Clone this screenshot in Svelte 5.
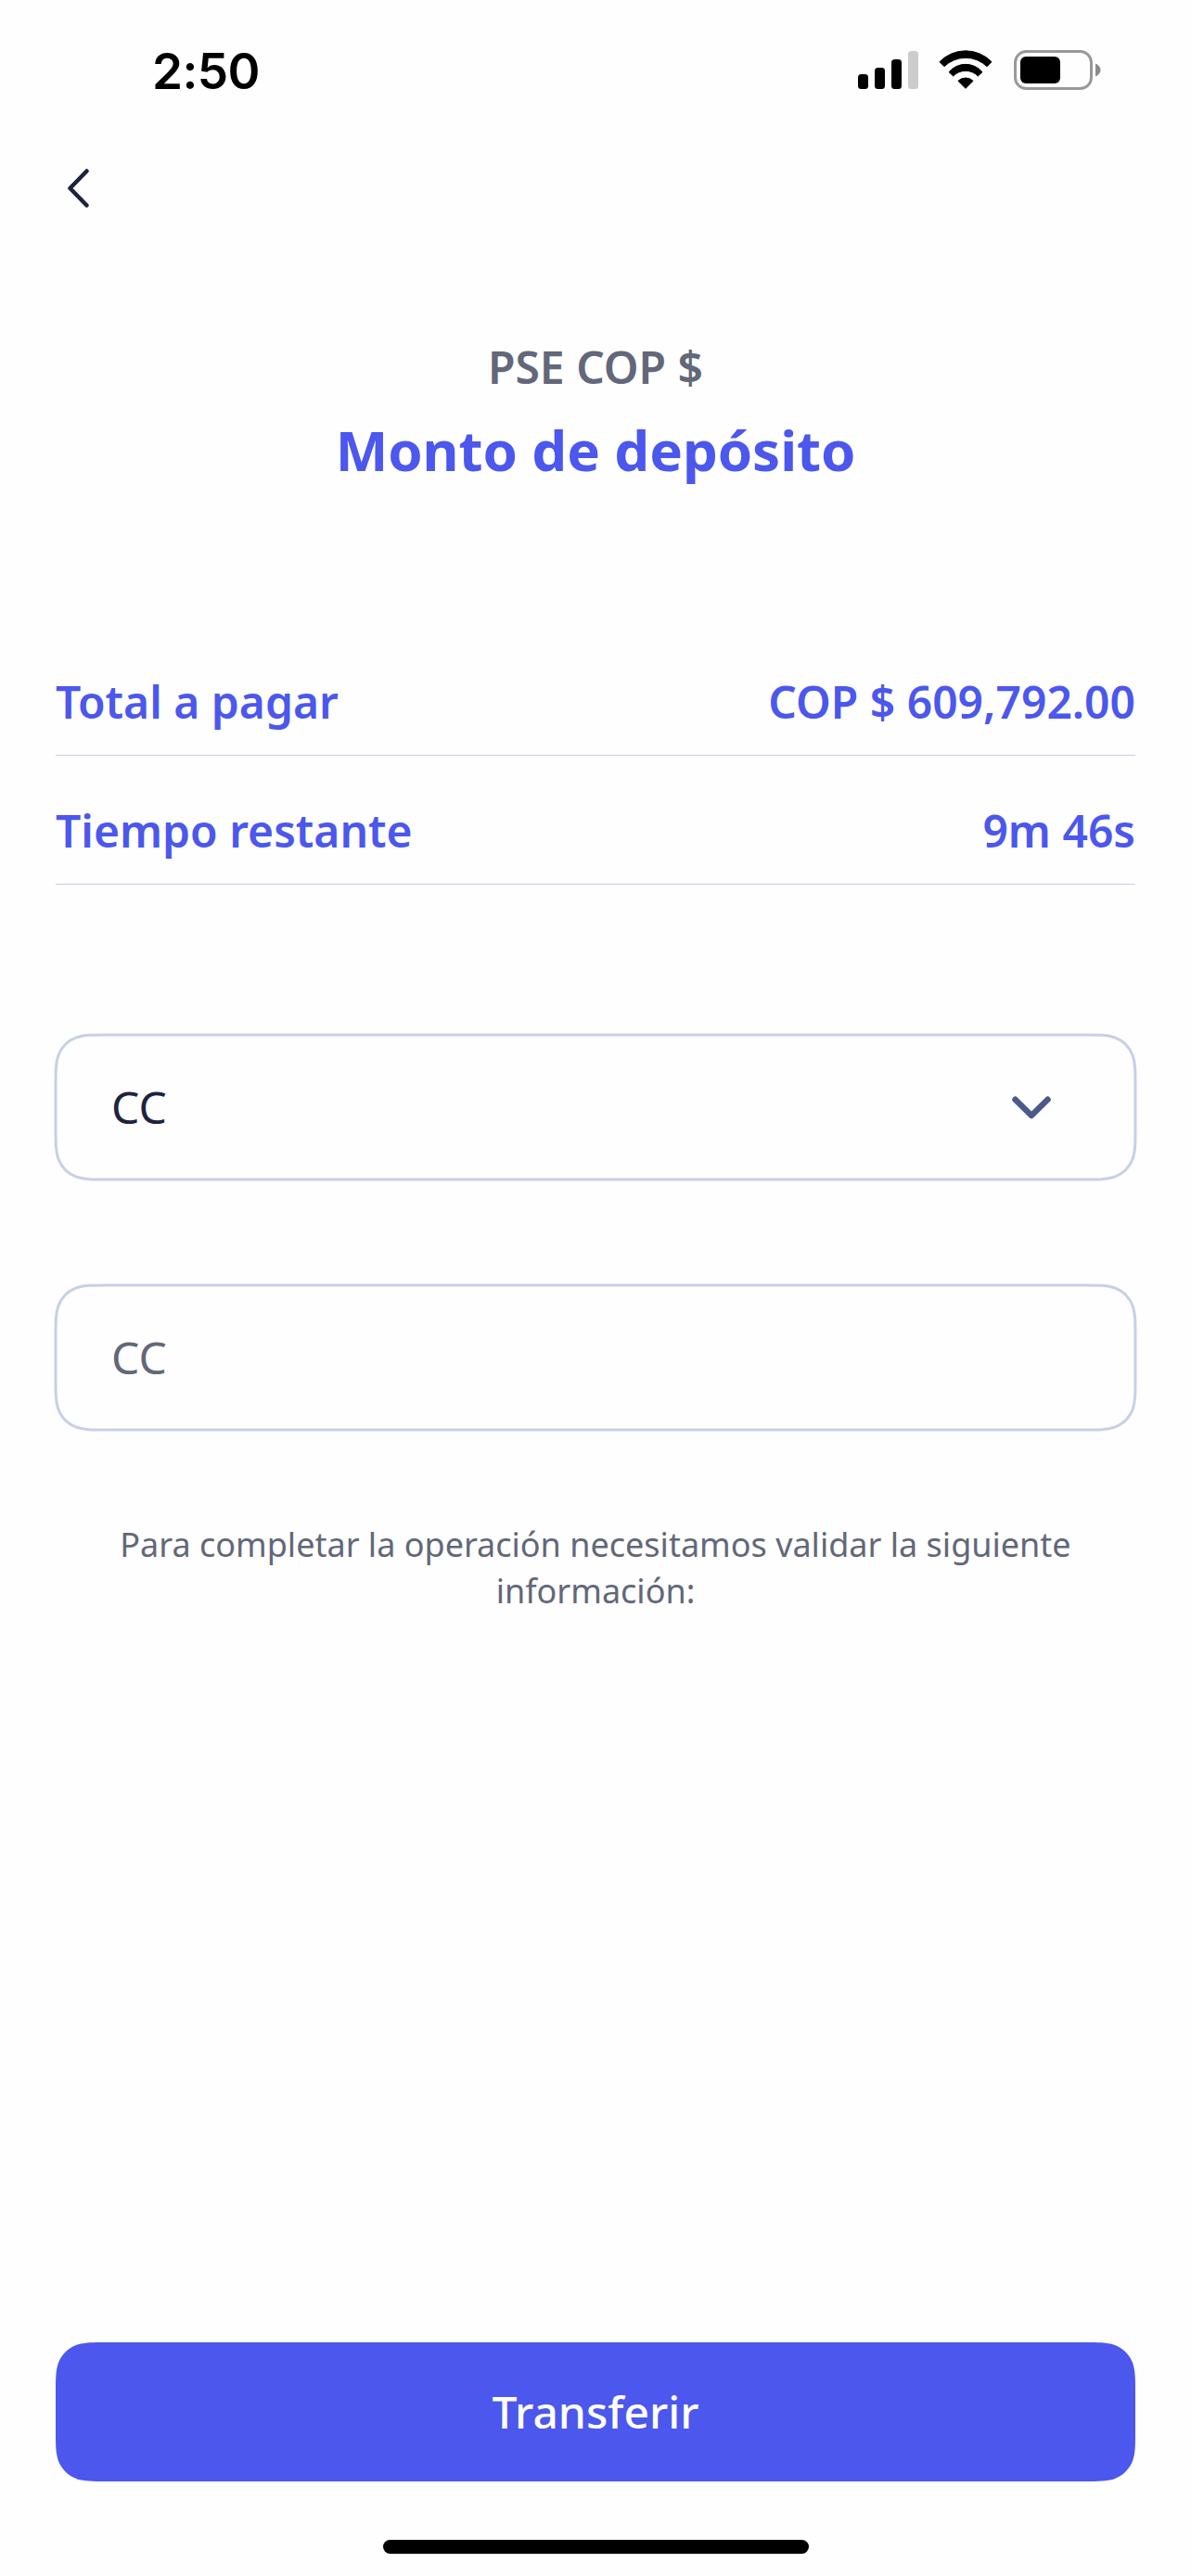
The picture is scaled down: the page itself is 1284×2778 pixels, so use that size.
<script>
  const rows = [
    { label: 'Total a pagar', value: 'COP $ 609,792.00' },
    { label: 'Tiempo restante', value: '9m 46s' }
  ];

  // Rounded rectangle with continuous-curvature corners.
  function smoothRect(x, y, w, h, r) {
    const corner = [
      [1.52866, 0], [1.08849, 0], [0.86841, 0], [0.63149, 0.07491],
      [0.37282, 0.16906], [0.16906, 0.37282], [0.07491, 0.63149],
      [0, 0.86841], [0, 1.08849], [0, 1.52866]
    ].map(([a, b]) => [a * r, b * r]);
    const back = [...corner].reverse();
    const curve = (pts) => {
      const p = pts.map(([a, b]) => `${a.toFixed(2)} ${b.toFixed(2)}`);
      return `L${p[0]} C${p[1]} ${p[2]} ${p[3]} C${p[4]} ${p[5]} ${p[6]} C${p[7]} ${p[8]} ${p[9]} `;
    };
    const d =
      curve(back.map(([a, b]) => [x + a, y + b])) +
      curve(corner.map(([a, b]) => [x + w - a, y + b])) +
      curve(back.map(([a, b]) => [x + w - a, y + h - b])) +
      curve(corner.map(([a, b]) => [x + a, y + h - b]));
    return 'M' + d.slice(1) + 'Z';
  }

  const fieldShape = smoothRect(2, 2, 1164, 156, 36);
  const buttonShape = smoothRect(0, 0, 1164, 150, 36);
</script>

<div class="screen">
  <header class="status">
    <span class="time">2:50</span>
    <div class="indicators">
      <svg class="signal" viewBox="0 0 65 43" aria-hidden="true">
        <rect x="0" y="26" width="11" height="16" rx="3.5" />
        <rect x="18" y="19" width="11" height="23" rx="3.5" />
        <rect x="36" y="10" width="11" height="32" rx="3.5" />
        <rect class="off" x="54" y="1" width="11" height="41" rx="3.5" />
      </svg>
      <svg class="wifi" viewBox="0 0 174 129" aria-hidden="true">
        <path d="M3 38 A117 117 0 0 1 171 38 L156 53 A99 99 0 0 0 18 53 Z" />
        <path d="M33 71 A71 71 0 0 1 141 71 L127 84 A56 56 0 0 0 47 84 Z" />
        <path d="M63 100 A34 34 0 0 1 111 100 L87 124 Z" />
      </svg>
      <svg class="battery" viewBox="0 0 95 43" aria-hidden="true">
        <rect class="shell" x="1.5" y="1.5" width="82" height="40" rx="12" />
        <rect x="7" y="7" width="43" height="29" rx="6" />
        <path class="cap" d="M88 14.5 C91.500 16 93.500 18.500 93.500 21.500 C93.500 24.500 91.500 27 88 28.500 Z" />
      </svg>
    </div>
  </header>

  <nav>
    <button class="back" aria-label="Volver">
      <svg viewBox="0 0 24 44"><path d="M20.500 3.500 L2.500 22 L20.500 40.500" /></svg>
    </button>
  </nav>

  <main>
    <p class="method">PSE COP $</p>
    <h1>Monto de depósito</h1>

    <dl>
      {#each rows as row}
        <div class="row">
          <dt>{row.label}</dt>
          <dd>{row.value}</dd>
        </div>
      {/each}
    </dl>

    <div class="field">
      <svg class="frame" viewBox="0 0 1168 160" aria-hidden="true"><path d={fieldShape} /></svg>
      <div class="content">
        <span>CC</span>
        <svg class="chevron" viewBox="0 0 42 25" aria-hidden="true"><path d="M3.500 3.700 L21 21 L38.500 3.700" /></svg>
      </div>
    </div>

    <div class="field">
      <svg class="frame" viewBox="0 0 1168 160" aria-hidden="true"><path d={fieldShape} /></svg>
      <div class="content hint"><span>CC</span></div>
    </div>

    <p class="note">Para completar la operación necesitamos validar la siguiente información:</p>
  </main>

  <footer>
    <button class="submit">
      <svg viewBox="0 0 1164 150" aria-hidden="true"><path d={buttonShape} /></svg>
      <span>Transferir</span>
    </button>
    <div class="home"></div>
  </footer>
</div>

<style>
  :global(body) {
    margin: 0;
    background: #fefefe;
  }
  .screen {
    box-sizing: border-box;
    width: 1284px;
    height: 2778px;
    display: flex;
    flex-direction: column;
    background: #fefefe;
    font-family: 'Noto Sans', sans-serif;
    font-size: 48px;
    line-height: 66px;
    color: #1c2340;
    overflow: hidden;
  }
  svg {
    display: block;
    flex: none;
  }
  button {
    padding: 0;
    border: 0;
    background: none;
    font: inherit;
  }
  p, h1, dl, dd {
    margin: 0;
  }
  .status {
    display: flex;
    justify-content: space-between;
    align-items: flex-start;
    height: 150px;
    padding: 54px 96px 0 164px;
    box-sizing: border-box;
  }
  .time {
    font-family: Inter, sans-serif;
    font-weight: 600;
    font-size: 53px;
    line-height: 46px;
    letter-spacing: -0.6px;
    color: #000;
  }
  .indicators {
    display: flex;
  }
  .signal {
    width: 65px;
    height: 43px;
    margin-right: 22px;
  }
  .signal .off {
    fill: #ccc;
  }
  .wifi {
    width: 58px;
    height: 43px;
    margin-right: 23px;
    stroke: #000;
    stroke-width: 3;
    stroke-linejoin: round;
  }
  .battery {
    width: 95px;
    height: 43px;
  }
  .battery .shell {
    fill: none;
    stroke: #999;
    stroke-width: 3;
  }
  .battery .cap {
    fill: #8c8c8c;
  }
  nav {
    height: 213px;
    padding: 31px 0 0 73px;
    box-sizing: border-box;
  }
  .back {
    display: block;
  }
  .back svg {
    width: 24px;
    height: 44px;
    fill: none;
    stroke: #1c2340;
    stroke-width: 4.5;
    stroke-linecap: round;
    stroke-linejoin: round;
  }
  main {
    flex: 1;
    padding: 0 58px;
  }
  .method {
    text-align: center;
    font-weight: 600;
    color: #626779;
  }
  h1 {
    margin-top: 15px;
    text-align: center;
    font-size: 60px;
    line-height: 82px;
    letter-spacing: -0.1px;
    font-weight: 700;
    color: #4b57ed;
  }
  dl {
    margin: 150px 2px 160px;
  }
  .row {
    display: flex;
    justify-content: space-between;
    padding: 48px 0 24px;
    border-bottom: 1px solid #c6cee7;
    font-weight: 600;
    color: #4b57ed;
  }
  .field {
    display: grid;
    height: 160px;
    margin-bottom: 110px;
  }
  .frame, .content {
    grid-area: 1 / 1;
  }
  .frame {
    width: 1168px;
    height: 160px;
    fill: none;
    stroke: #c8cfe8;
    stroke-width: 3;
  }
  .content {
    display: flex;
    align-items: center;
    justify-content: space-between;
    padding: 0 93px 0 62px;
  }
  .hint {
    color: #626779;
  }
  .chevron {
    width: 42px;
    height: 25px;
    fill: none;
    stroke: #4b5a8a;
    stroke-width: 6.5;
    stroke-linecap: round;
    stroke-linejoin: round;
  }
  .note {
    margin: -13px 40px 0;
    text-align: center;
    font-size: 36px;
    line-height: 50px;
    color: #626779;
  }
  footer {
    display: flex;
    flex-direction: column;
    align-items: center;
    height: 252px;
  }
  .submit {
    display: grid;
    width: 1164px;
    height: 150px;
    place-items: center;
    font-weight: 500;
    color: #fefefe;
  }
  .submit svg, .submit span {
    grid-area: 1 / 1;
  }
  .submit svg {
    width: 1164px;
    height: 150px;
    fill: #4b57ed;
  }
  .home {
    width: 459px;
    height: 15px;
    margin: 63px 0 0 1px;
    border-radius: 8px;
    background: #000;
  }
</style>
